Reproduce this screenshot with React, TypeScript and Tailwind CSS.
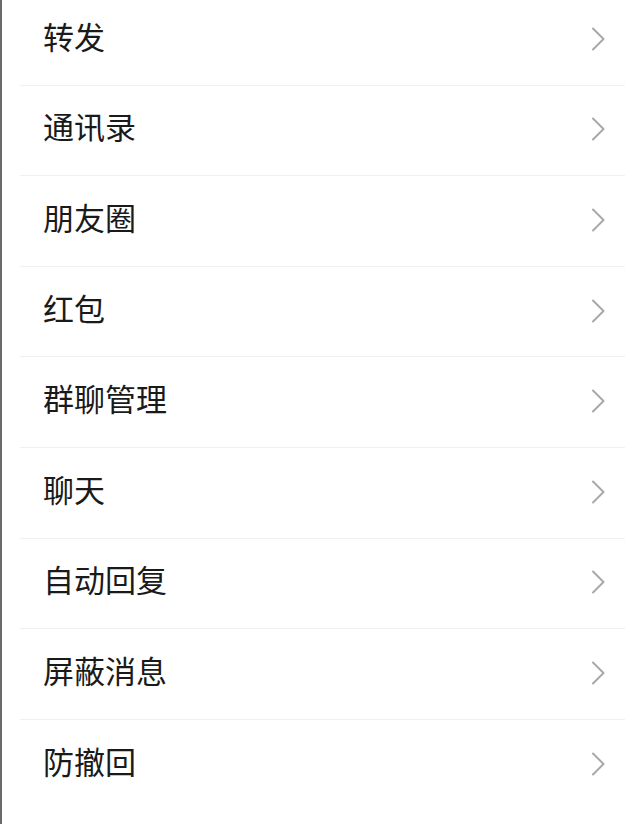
const ITEMS = ['转发', '通讯录', '朋友圈', '红包', '群聊管理', '聊天', '自动回复', '屏蔽消息', '防撤回']

function Chevron() {
  return (
    <svg width="14" height="24" viewBox="0 0 14 24" fill="none" className="shrink-0">
      <path d="M2 1.5 L12.5 12 L2 22.5" stroke="#a8a8a8" strokeWidth="2" strokeLinecap="round" strokeLinejoin="round" />
    </svg>
  )
}

export default function App() {
  return (
    <div
      className="w-[640px] h-[824px] overflow-hidden bg-white border-l-2 border-[#6a6a6a]"
      style={{ fontFamily: '"Noto Sans CJK SC", "Noto Sans", sans-serif' }}
    >
      <div className="-mt-[5px] pl-[18px] pr-[15px]">
        {ITEMS.map((label, i) => (
          <div
            key={label}
            className={`h-[90.6px] flex items-center justify-between ${i < ITEMS.length - 1 ? 'border-b border-[#f1f1f1]' : ''}`}
          >
            <span className="pl-[23px] text-[31px] leading-none text-[#1a1a1a] -mt-[9px]">{label}</span>
            <span className="pr-[20px] -mt-[2px]">
              <Chevron />
            </span>
          </div>
        ))}
      </div>
    </div>
  )
}
